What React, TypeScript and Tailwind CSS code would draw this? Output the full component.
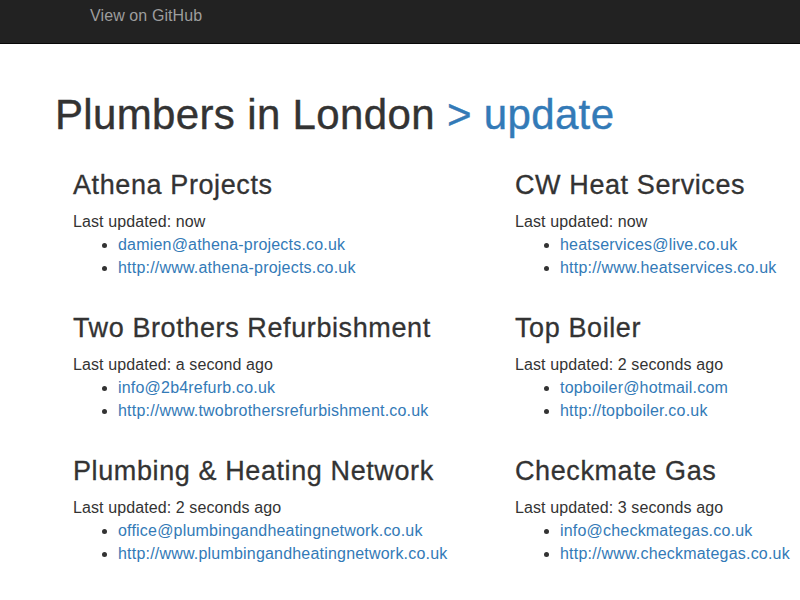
const firms = [
  {
    name: "Athena Projects",
    updated: "now",
    email: "damien@athena-projects.co.uk",
    url: "http://www.athena-projects.co.uk",
  },
  {
    name: "CW Heat Services",
    updated: "now",
    email: "heatservices@live.co.uk",
    url: "http://www.heatservices.co.uk",
  },
  {
    name: "Two Brothers Refurbishment",
    updated: "a second ago",
    email: "info@2b4refurb.co.uk",
    url: "http://www.twobrothersrefurbishment.co.uk",
  },
  {
    name: "Top Boiler",
    updated: "2 seconds ago",
    email: "topboiler@hotmail.com",
    url: "http://topboiler.co.uk",
  },
  {
    name: "Plumbing & Heating Network",
    updated: "2 seconds ago",
    email: "office@plumbingandheatingnetwork.co.uk",
    url: "http://www.plumbingandheatingnetwork.co.uk",
  },
  {
    name: "Checkmate Gas",
    updated: "3 seconds ago",
    email: "info@checkmategas.co.uk",
    url: "http://www.checkmategas.co.uk",
  },
];

export default function App() {
  return (
    <div className="min-h-[600px] bg-white font-['Liberation_Sans',Arial,sans-serif] text-[16px] text-[#333] overflow-hidden">
      {/* Navbar */}
      <div className="h-[44px] bg-[#222] border-b border-[#080808] pl-[90px]">
        <a href="#" className="block pt-[4px] leading-[23px] text-[#9d9d9d] whitespace-nowrap tracking-[0.1px]">
          View on GitHub
        </a>
      </div>

      {/* Title */}
      <h1 className="ml-[55px] mt-[48px] mb-[8px] text-[42px] leading-[45px] tracking-[0.35px] whitespace-nowrap [-webkit-text-stroke:0.4px]">
        Plumbers in London <span className="text-[#337ab7]">&gt; update</span>
      </h1>

      {/* Listing */}
      <div className="grid grid-cols-[442px_1fr] pl-[73px]">
        {firms.map((f) => (
          <div key={f.name} className="whitespace-nowrap">
            <h3 className="mt-[25px] mb-[11px] text-[27px] leading-[30px] tracking-[0.6px] [-webkit-text-stroke:0.3px]">
              {f.name}
            </h3>
            <div className="leading-[22px] tracking-[0.1px]">Last updated: {f.updated}</div>
            <ul className="list-disc pl-[45px] mb-[9px] leading-[23px] tracking-[0.2px]">
              <li>
                <a href="#" className="text-[#337ab7]">{f.email}</a>
              </li>
              <li>
                <a href="#" className="text-[#337ab7]">{f.url}</a>
              </li>
            </ul>
          </div>
        ))}
      </div>
    </div>
  );
}
